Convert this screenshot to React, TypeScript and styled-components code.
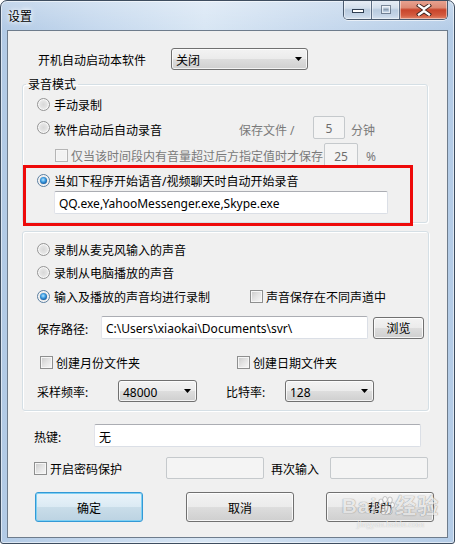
import React from "react";
import styled, { createGlobalStyle, css } from "styled-components";

const UI_FONT = `"Noto Sans", "Noto Sans CJK SC", sans-serif`;

const Global = createGlobalStyle`
  html, body { margin: 0; padding: 0; background: #ffffff; }
  body { font-family: ${UI_FONT}; font-size: 12px; line-height: 16px; color: #000; }
  * { box-sizing: border-box; }
`;

const Window = styled.div`
  position: relative;
  width: 455px;
  height: 544px;
  border: 1px solid #3e4d5f;
  border-radius: 7px 7px 3px 3px;
  background:
    linear-gradient(180deg, rgba(255,255,255,0.25) 0%, rgba(255,255,255,0) 30px),
    linear-gradient(90deg, #b2cae5 0%, #c6d9ee 22%, #d8e6f4 45%, #c8daee 68%, #b4cce7 100%);
  box-shadow: inset 0 0 0 1px rgba(255, 255, 255, 0.55);
  padding: 0 6px 5px 6px;
  display: flex;
  flex-direction: column;
  overflow: hidden;
`;

const TitleBar = styled.div`
  height: 29px;
  display: flex;
  justify-content: space-between;
  align-items: flex-start;
  flex: none;
`;

const Title = styled.div`
  margin: 8px 0 0 1px;
  font-size: 12px;
  line-height: 16px;
  color: #000;
  text-shadow: 0 0 4px #ffffff, 0 0 6px #ffffff;
`;

const CaptionGroup = styled.div`
  display: flex;
  height: 20px;
  margin-top: -1px;
  border: 1px solid #4a5a6e;
  border-top: none;
  border-radius: 0 0 5px 5px;
  overflow: hidden;
  box-shadow: 0 1px 0 rgba(255,255,255,0.6);
`;

const CaptionButton = styled.div<{ $kind: "min" | "max" | "close" }>`
  height: 100%;
  display: flex;
  align-items: center;
  justify-content: center;
  box-shadow: inset 0 0 0 1px rgba(255, 255, 255, 0.45);
  ${(p) =>
    p.$kind === "close"
      ? css`
          width: 47px;
          background: linear-gradient(180deg, #e9a594 0%, #dd8a74 40%, #c8442b 52%, #d35a3e 80%, #e0856a 100%);
        `
      : css`
          width: 28px;
          border-right: 1px solid #5d6e84;
          background: linear-gradient(180deg, #e8eef6 0%, #d3dfec 42%, #b9cbdf 52%, #c4d4e6 80%, #d6e2ef 100%);
        `}
`;

const Client = styled.div`
  flex: 1;
  position: relative;
  background: #f0f0f0;
  border: 1px solid #6e7c8c;
  display: flex;
  flex-direction: column;
`;

const Line = styled.div<{ $h: number; $mt?: number; $pl?: number; $cols?: string }>`
  height: ${(p) => p.$h}px;
  margin-top: ${(p) => p.$mt ?? 0}px;
  padding-left: ${(p) => p.$pl ?? 0}px;
  display: ${(p) => (p.$cols ? "grid" : "flex")};
  ${(p) => p.$cols && css`grid-template-columns: ${p.$cols};`}
  align-items: center;
  flex: none;
`;

const Text = styled.span<{ $muted?: boolean; $nudge?: number }>`
  white-space: nowrap;
  line-height: 16px;
  color: ${(p) => (p.$muted ? "#7a7a7a" : "#000")};
  padding-top: ${(p) => p.$nudge ?? 4}px;
`;

const Group = styled.fieldset<{ $mt: number; $w: number; $pb?: number }>`
  margin: ${(p) => p.$mt}px 0 0 14px;
  width: ${(p) => p.$w}px;
  padding: 0 0 ${(p) => p.$pb ?? 0}px 0;
  border: 1px solid #d5dfe5;
  border-radius: 3px;
  box-shadow: 1px 1px 0 #ffffff, inset 1px 1px 0 #ffffff;
  min-width: 0;
  flex: none;
`;

const Legend = styled.legend`
  margin-left: 3px;
  padding: 2px 2px 0 2px;
  line-height: 16px;
  font-size: 12px;
`;

const Highlight = styled.div`
  margin: -2px 0 -4px 0;
  width: 390px;
  height: 61px;
  border: 3px solid #ee0a0a;
  padding-left: 11px;
  display: flex;
  flex-direction: column;
  position: relative;
`;

const Choice = styled.label`
  display: flex;
  align-items: center;
  gap: 4px;
  white-space: nowrap;
`;

const Tick = styled.label<{ $muted?: boolean }>`
  display: flex;
  align-items: center;
  gap: 3px;
  white-space: nowrap;
  color: ${(p) => (p.$muted ? "#6d6d6d" : "#000")};
`;

const RadioDot = styled.span<{ $checked?: boolean }>`
  position: relative;
  flex: none;
  width: 13px;
  height: 13px;
  border-radius: 50%;
  border: 1px solid #949494;
  background: radial-gradient(circle at 50% 50%, #d8d8d8 0%, #e4e4e4 45%, #f6f6f6 100%);
  box-shadow: inset 0 0 0 1px #f8f8f8;
  ${(p) =>
    p.$checked &&
    css`
      border-color: #5c7fa0;
      &::after {
        content: "";
        position: absolute;
        left: 2px;
        top: 2px;
        width: 7px;
        height: 7px;
        border-radius: 50%;
        background: radial-gradient(circle at 45% 40%, #b4e4ff 0%, #3b9be0 40%, #0d4e94 80%, #0b3a70 100%);
      }
    `}
`;

const Box = styled.span<{ $muted?: boolean }>`
  flex: none;
  width: 13px;
  height: 13px;
  border: 1px solid ${(p) => (p.$muted ? "#b5b5b5" : "#8e8f8f")};
  background: ${(p) =>
    p.$muted ? "#f2f2f2" : "linear-gradient(135deg, #c9c9c9 0%, #e4e4e4 50%, #f8f8f8 100%)"};
  box-shadow: inset 0 0 0 1px #f6f6f6;
`;

const Field = styled.input<{ $w: number; $h: number; $off?: boolean; $center?: boolean; $ml?: number; $mt?: number }>`
  width: ${(p) => p.$w}px;
  height: ${(p) => p.$h}px;
  margin: ${(p) => p.$mt ?? 0}px 0 0 ${(p) => p.$ml ?? 0}px;
  padding: 2px 4px 0 4px;
  font-family: ${UI_FONT};
  font-size: 12px;
  line-height: 16px;
  outline: none;
  border-radius: 2px;
  flex: none;
  text-align: ${(p) => (p.$center ? "center" : "left")};
  ${(p) =>
    p.$off
      ? css`
          background: #f4f4f4;
          border: 1px solid #c5c9cc;
          color: #6d6d6d;
        `
      : css`
          background: #ffffff;
          border: 1px solid #dbdfe6;
          border-top-color: #abadb3;
          border-left-color: #e2e3ea;
          color: #000;
        `}
`;

const Combo = styled.div<{ $w: number }>`
  width: ${(p) => p.$w}px;
  height: 22px;
  border: 1px solid #707070;
  border-radius: 3px;
  background: linear-gradient(180deg, #f3f3f3 0%, #ebebeb 50%, #dddddd 51%, #cfcfcf 100%);
  box-shadow: inset 0 0 0 1px rgba(255, 255, 255, 0.75);
  display: flex;
  align-items: center;
  justify-content: space-between;
  padding: 0 5px 0 4px;
  font-family: ${UI_FONT};
  white-space: nowrap;
`;

const ComboText = styled.span`
  padding-top: 3px;
  line-height: 16px;
`;

const Push = styled.button<{ $w: number; $h: number; $primary?: boolean }>`
  width: ${(p) => p.$w}px;
  height: ${(p) => p.$h}px;
  padding: 3px 0 0 0;
  font-family: ${UI_FONT};
  font-size: 12px;
  line-height: 16px;
  color: #000;
  border-radius: 3px;
  cursor: default;
  ${(p) =>
    p.$primary
      ? css`
          border: 1px solid #3399d6;
          background: linear-gradient(180deg, #eaf4fa 0%, #dbeaf3 50%, #c9dde9 51%, #bcd3e2 100%);
          box-shadow: inset 0 0 0 1px #7ed0f3;
        `
      : css`
          border: 1px solid #707070;
          background: linear-gradient(180deg, #f3f3f3 0%, #ebebeb 50%, #dddddd 51%, #cfcfcf 100%);
          box-shadow: inset 0 0 0 1px rgba(255, 255, 255, 0.8);
        `}
`;

const ButtonRow = styled.div`
  position: relative;
  margin-top: 13px;
  height: 30px;
  padding-left: 27px;
  display: grid;
  grid-template-columns: 151px 140px 108px;
  align-items: start;
`;

const Watermark = styled.div`
  position: absolute;
  left: 330px;
  top: 1px;
  width: 105px;
  display: flex;
  flex-direction: column;
  align-items: center;
  pointer-events: none;
  color: rgba(255, 255, 255, 0.85);
`;

const WatermarkBrand = styled.div`
  display: flex;
  align-items: center;
  font-family: "Liberation Sans", "Noto Sans CJK SC", sans-serif;
  font-weight: bold;
  font-size: 21px;
  line-height: 26px;
  letter-spacing: 1px;
  text-shadow: 0 0 1px rgba(90, 90, 90, 0.7), 0 0 1px rgba(90, 90, 90, 0.7);
  opacity: 0.7;
`;

const WatermarkUrl = styled.div`
  font-family: "Liberation Serif", serif;
  font-size: 9px;
  line-height: 10px;
  color: rgba(255, 255, 255, 0.9);
  text-shadow: 0 0 1px rgba(120, 120, 120, 0.7);
  opacity: 0.8;
`;

const Arrow = () => (
  <svg width="7" height="4" viewBox="0 0 7 4">
    <path d="M0 0H7L3.5 4Z" fill="#000" />
  </svg>
);

const MinGlyph = () => (
  <svg width="14" height="8" viewBox="0 0 14 8">
    <rect x="1.5" y="3.5" width="11" height="3" fill="#fff" stroke="#2f3e52" />
  </svg>
);

const MaxGlyph = () => (
  <svg width="14" height="12" viewBox="0 0 14 12">
    <rect x="2.5" y="1.5" width="9" height="8" fill="none" stroke="#2f3e52" opacity="0.55" />
    <rect x="3.5" y="2.5" width="7" height="6" fill="none" stroke="#fff" opacity="0.6" />
    <rect x="4.5" y="4.5" width="5" height="2" fill="#2f3e52" opacity="0.35" />
  </svg>
);

const CloseGlyph = () => (
  <svg width="16" height="12" viewBox="0 0 16 12">
    <path d="M3 1.5L8 5L13 1.5M3 10.5L8 7L13 10.5" stroke="#3d2420" strokeWidth="4.2" fill="none" strokeLinecap="square" />
    <path d="M3 1.5L8 5L13 1.5M3 10.5L8 7L13 10.5" stroke="#ffffff" strokeWidth="2.4" fill="none" strokeLinecap="square" />
  </svg>
);

const Paw = () => (
  <svg width="18" height="20" viewBox="0 0 18 20">
    <g fill="rgba(255,255,255,0.85)" stroke="rgba(100,100,100,0.6)" strokeWidth="0.8">
      <ellipse cx="4" cy="6" rx="2.3" ry="3" />
      <ellipse cx="8" cy="3.5" rx="2.3" ry="3" />
      <ellipse cx="13" cy="4" rx="2.3" ry="3" />
      <ellipse cx="15.5" cy="9" rx="2" ry="2.6" />
      <path d="M4 16C4 11 7 9 9.5 9S15 12 15 16C15 19 12 18.5 9.5 18.5S4 19 4 16Z" />
    </g>
  </svg>
);

export default function App() {
  return (
    <>
      <Global />
      <Window>
        <TitleBar>
          <Title>设置</Title>
          <CaptionGroup>
            <CaptionButton $kind="min">
              <MinGlyph />
            </CaptionButton>
            <CaptionButton $kind="max">
              <MaxGlyph />
            </CaptionButton>
            <CaptionButton $kind="close">
              <CloseGlyph />
            </CaptionButton>
          </CaptionGroup>
        </TitleBar>

        <Client>
          <Line $h={22} $mt={17} $pl={30} $cols="133px 137px">
            <Text>开机自动启动本软件</Text>
            <Combo $w={137}>
              <ComboText>关闭</ComboText>
              <Arrow />
            </Combo>
          </Line>

          <Group $mt={5} $w={406}>
            <Legend>录音模式</Legend>
            <Line $h={24} $mt={-1} $pl={14}>
              <Choice>
                <RadioDot />
                <Text>手动录制</Text>
              </Choice>
            </Line>
            <Line $h={23} $pl={14} $cols="202px 74px 38px auto">
              <Choice>
                <RadioDot />
                <Text $nudge={7}>软件启动后自动录音</Text>
              </Choice>
              <Text $muted $nudge={7}>保存文件 /</Text>
              <Field $w={32} $h={23} $off $center readOnly value="5" />
              <Text $muted $nudge={7}>分钟</Text>
            </Line>
            <Line $h={24} $mt={4} $pl={32} $cols="269px 42px auto">
              <Tick $muted>
                <Box $muted />
                <Text $muted>仅当该时间段内有音量超过后方指定值时才保存</Text>
              </Tick>
              <Field $w={34} $h={24} $off $center readOnly value="25" />
              <Text $muted>%</Text>
            </Line>
            <Highlight>
              <Line $h={20} $mt={2}>
                <Choice>
                  <RadioDot $checked />
                  <Text>当如下程序开始语音/视频聊天时自动开始录音</Text>
                </Choice>
              </Line>
              <Field $w={334} $h={23} $ml={17} $mt={1} readOnly value="QQ.exe,YahooMessenger.exe,Skype.exe" />
            </Highlight>
          </Group>

          <Group $mt={8} $w={407} $pb={8}>
            <Line $h={22} $mt={6} $pl={14}>
              <Choice>
                <RadioDot />
                <Text>录制从麦克风输入的声音</Text>
              </Choice>
            </Line>
            <Line $h={24} $pl={14}>
              <Choice>
                <RadioDot />
                <Text>录制从电脑播放的声音</Text>
              </Choice>
            </Line>
            <Line $h={24} $pl={14} $cols="213px auto">
              <Choice>
                <RadioDot $checked />
                <Text>输入及播放的声音均进行录制</Text>
              </Choice>
              <Tick>
                <Box />
                <Text>声音保存在不同声道中</Text>
              </Tick>
            </Line>
            <Line $h={23} $mt={8} $pl={14} $cols="64px 272px auto">
              <Text>保存路径:</Text>
              <Field $w={267} $h={23} readOnly value="C:\Users\xiaokai\Documents\svr\" />
              <Push $w={51} $h={22}>浏览</Push>
            </Line>
            <Line $h={20} $mt={13} $pl={17} $cols="197px auto">
              <Tick>
                <Box />
                <Text>创建月份文件夹</Text>
              </Tick>
              <Tick>
                <Box />
                <Text>创建日期文件夹</Text>
              </Tick>
            </Line>
            <Line $h={22} $mt={8} $pl={14} $cols="81px 108px 59px 89px">
              <Text>采样频率:</Text>
              <Combo $w={79}>
                <ComboText>48000</ComboText>
                <Arrow />
              </Combo>
              <Text>比特率:</Text>
              <Combo $w={89}>
                <ComboText>128</ComboText>
                <Arrow />
              </Combo>
            </Line>
          </Group>

          <Line $h={23} $mt={13} $pl={26} $cols="60px 327px">
            <Text>热键:</Text>
            <Field $w={327} $h={23} readOnly value="无" />
          </Line>

          <Line $h={22} $mt={10} $pl={26} $cols="132px 105px 59px 98px">
            <Tick>
              <Box />
              <Text>开启密码保护</Text>
            </Tick>
            <Field $w={98} $h={22} $off readOnly value="" />
            <Text>再次输入</Text>
            <Field $w={98} $h={22} $off readOnly value="" />
          </Line>

          <ButtonRow>
            <Push $w={108} $h={30} $primary>确定</Push>
            <Push $w={108} $h={30}>取消</Push>
            <Push $w={108} $h={30}>帮助</Push>
            <Watermark>
              <WatermarkBrand>
                <span>Bai</span>
                <Paw />
                <span>经验</span>
              </WatermarkBrand>
              <WatermarkUrl>jingyan.baidu.com</WatermarkUrl>
            </Watermark>
          </ButtonRow>
        </Client>
      </Window>
    </>
  );
}
